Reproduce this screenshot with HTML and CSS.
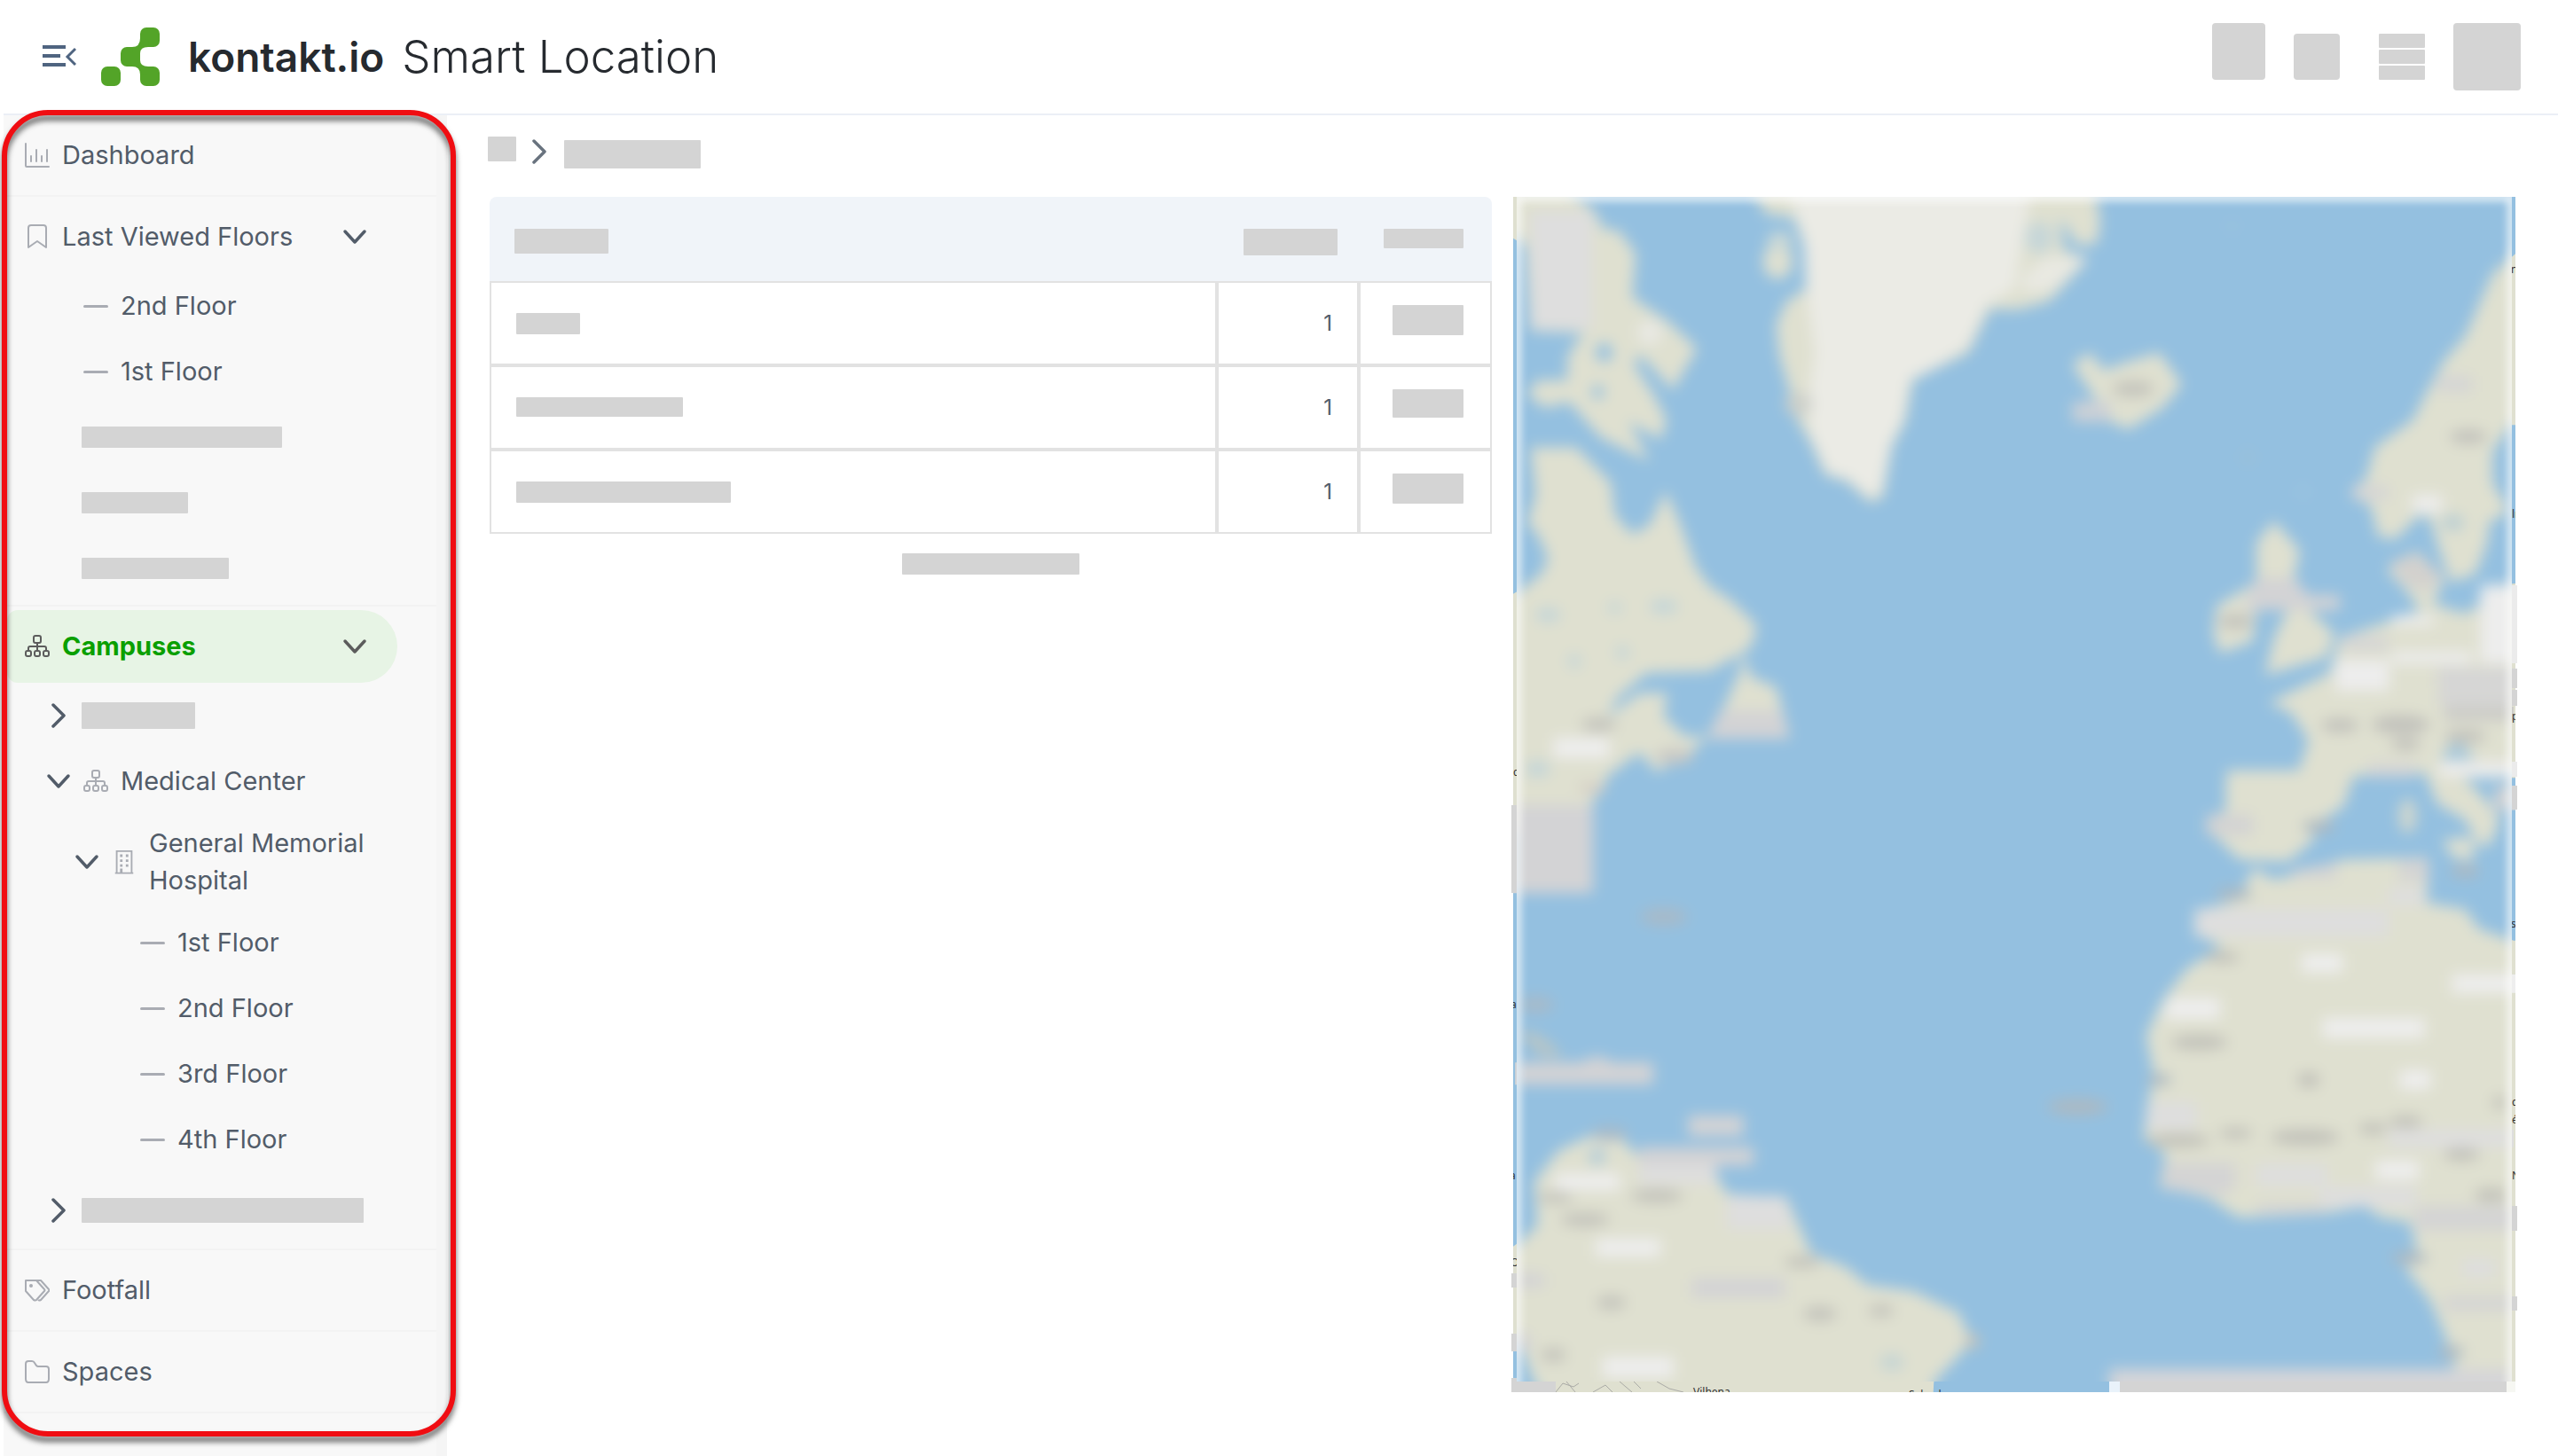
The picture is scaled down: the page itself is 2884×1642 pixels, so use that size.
FILE: index.html
```html
<!DOCTYPE html>
<html lang="en">
<head>
<meta charset="utf-8">
<title>Smart Location</title>
<link rel="stylesheet" href="styles.css">
</head>
<body>
<svg class="defs" aria-hidden="true">
  <symbol id="i-down" viewBox="0 0 28 28"><path d="M3 8l11 12L25 8" fill="none" stroke="currentColor" stroke-width="3.500" stroke-linecap="round" stroke-linejoin="round"/></symbol>
  <symbol id="i-right" viewBox="0 0 28 28"><path d="M8 2l12 12L8 26" fill="none" stroke="currentColor" stroke-width="3.500" stroke-linecap="round" stroke-linejoin="round"/></symbol>
  <symbol id="i-dash" viewBox="0 0 28 28"><path d="M1.500 14.500h25" stroke="currentColor" stroke-width="3" stroke-linecap="round"/></symbol>
  <symbol id="i-sitemap" viewBox="0 0 28 28"><g fill="none" stroke="currentColor" stroke-width="2"><rect x="10" y="2" width="8" height="8" rx="2"/><rect x="1" y="19" width="6" height="6" rx="2"/><rect x="11" y="19" width="6" height="6" rx="2"/><rect x="21" y="19" width="6" height="6" rx="2"/><path d="M14 10v9M4 19v-3q0-2 2-2h16q2 0 2 2v3"/></g></symbol>
  <symbol id="i-chart" viewBox="0 0 28 28"><g fill="none" stroke="currentColor" stroke-width="2" stroke-linecap="round"><path d="M1 1v25q0 1 1 1h25"/><path d="M7 15v6M13 8v13M19 15v6M25 8v13"/></g></symbol>
  <symbol id="i-bookmark" viewBox="0 0 28 28"><path d="M4 26V4q0-3 3-3h14q3 0 3 3v22l-10-7z" fill="none" stroke="currentColor" stroke-width="2" stroke-linejoin="round"/></symbol>
  <symbol id="i-building" viewBox="0 0 28 30"><path d="M5 28V2h18v26M3 28.500h22" fill="none" stroke="currentColor" stroke-width="2"/><path d="M9 6h3v3H9zM16 6h3v3h-3zM9 12h3v3H9zM16 12h3v3h-3zM9 18h3v3H9zM16 18h3v3h-3zM9 23h3v5H9z" fill="currentColor"/></symbol>
  <symbol id="i-tags" viewBox="0 0 28 28"><g fill="none" stroke="currentColor" stroke-width="2" stroke-linejoin="round"><path d="M1 3h12l9 10q1 1 0 2l-9 10q-1 1-3 0L1 15z"/><path d="M13 3h5l9 10q1 1 0 2l-9 10q-2 1-3 0"/></g><circle cx="7" cy="9" r="2" fill="currentColor"/></symbol>
  <symbol id="i-folder" viewBox="0 0 28 28"><path d="M1 22V5q0-3 3-3h4q2 0 3 2l2 3q1 1 2 1h9q3 0 3 3v11q0 4-3 4H4q-3 0-3-4z" fill="none" stroke="currentColor" stroke-width="2"/></symbol>
</svg>

<header class="topbar">
  <button class="menu-toggle" type="button" aria-label="Collapse menu">
    <svg width="38" height="28" viewBox="0 0 38 28"><g fill="none" stroke="#4f6480" stroke-width="4"><path d="M0 3h26M0 13h20M0 23h26"/><path d="M37 5l-9 9 9 9" stroke-width="3"/></g></svg>
  </button>
  <a class="brand" href="#">
    <svg width="66" height="66" viewBox="0 0 66 66" aria-hidden="true"><g fill="#53a428"><rect x="44" width="22" height="22" rx="7"/><rect x="22" y="22" width="22" height="22" rx="7"/><rect y="44" width="22" height="22" rx="7"/><rect x="44" y="44" width="22" height="22" rx="7"/><path d="M44 12q0 10-9 10l1 7h8q0-7 9-7l1-8zM33 37l2 7q9 0 9 9l9-1v-8q-9 0-9-7z"/></g></svg>
    <span class="brand-name">kontakt.io</span>
  </a>
  <h1 class="product">Smart Location</h1>
  <div class="tools">
    <div class="tool-group">
      <span class="ph ph-round" style="width:60px;height:64px"></span>
      <span class="ph ph-round" style="width:52px;height:52px"></span>
      <span class="tool-lines"><span class="ph"></span><span class="ph"></span><span class="ph"></span></span>
    </div>
    <span class="ph ph-round" style="width:76px;height:76px"></span>
  </div>
</header>

<div class="layout">
  <nav class="sidebar" aria-label="Locations">
    <section class="group">
      <a class="item" href="#"><svg class="icon"><use href="#i-chart"/></svg>Dashboard</a>
    </section>
    <section class="group">
      <button class="item" type="button"><svg class="icon"><use href="#i-bookmark"/></svg>Last Viewed Floors<svg class="caret end"><use href="#i-down"/></svg></button>
      <ul class="tree">
        <li><a class="node leaf" href="#"><svg class="icon"><use href="#i-dash"/></svg>2nd Floor</a></li>
        <li><a class="node leaf" href="#"><svg class="icon"><use href="#i-dash"/></svg>1st Floor</a></li>
        <li class="node masked"><span class="ph" style="width:226px;height:24px"></span></li>
        <li class="node masked"><span class="ph" style="width:120px;height:24px"></span></li>
        <li class="node masked"><span class="ph" style="width:166px;height:24px"></span></li>
      </ul>
    </section>
    <section class="group group-campuses">
      <button class="item active" type="button"><svg class="icon"><use href="#i-sitemap"/></svg>Campuses<svg class="caret end"><use href="#i-down"/></svg></button>
      <ul class="tree">
        <li><button class="node" type="button" aria-label="Expand campus"><svg class="caret"><use href="#i-right"/></svg><span class="ph" style="width:128px;height:30px"></span></button></li>
        <li>
          <button class="node" type="button"><svg class="caret"><use href="#i-down"/></svg><svg class="icon"><use href="#i-sitemap"/></svg>Medical Center</button>
          <ul class="tree">
            <li>
              <button class="node building" type="button"><svg class="caret"><use href="#i-down"/></svg><svg class="icon"><use href="#i-building"/></svg><span>General Memorial<br>Hospital</span></button>
              <ul class="tree">
                <li><a class="node floor" href="#"><svg class="icon"><use href="#i-dash"/></svg>1st Floor</a></li>
                <li><a class="node floor" href="#"><svg class="icon"><use href="#i-dash"/></svg>2nd Floor</a></li>
                <li><a class="node floor" href="#"><svg class="icon"><use href="#i-dash"/></svg>3rd Floor</a></li>
                <li><a class="node floor" href="#"><svg class="icon"><use href="#i-dash"/></svg>4th Floor</a></li>
              </ul>
            </li>
          </ul>
        </li>
        <li><button class="node last" type="button" aria-label="Expand campus"><svg class="caret"><use href="#i-right"/></svg><span class="ph" style="width:318px;height:28px"></span></button></li>
      </ul>
    </section>
    <section class="group">
      <a class="item" href="#"><svg class="icon"><use href="#i-tags"/></svg>Footfall</a>
    </section>
    <section class="group">
      <a class="item" href="#"><svg class="icon"><use href="#i-folder"/></svg>Spaces</a>
    </section>
    <div class="callout" aria-hidden="true"></div>
  </nav>

  <main class="content">
    <div class="crumbs">
      <span class="ph" style="width:32px;height:28px"></span>
      <svg class="caret"><use href="#i-right"/></svg>
      <span class="ph crumb-current" style="width:154px;height:32px"></span>
    </div>
    <div class="panels">
      <section class="list">
        <table class="sites">
          <colgroup><col><col class="col-count"><col class="col-action"></colgroup>
          <thead>
            <tr>
              <th><span class="ph" style="width:106px;height:28px"></span></th>
              <th class="head-count"><span class="ph" style="width:106px;height:30px"></span></th>
              <th class="action"><span class="ph" style="width:90px;height:22px"></span></th>
            </tr>
          </thead>
          <tbody>
            <tr><td><span class="ph" style="width:72px;height:24px"></span></td><td class="count">1</td><td class="action"><span class="ph" style="width:80px;height:34px"></span></td></tr>
            <tr><td><span class="ph" style="width:188px;height:22px"></span></td><td class="count">1</td><td class="action"><span class="ph" style="width:80px;height:32px"></span></td></tr>
            <tr><td><span class="ph" style="width:242px;height:24px"></span></td><td class="count">1</td><td class="action"><span class="ph" style="width:80px;height:34px"></span></td></tr>
          </tbody>
        </table>
        <span class="ph list-foot" style="width:200px;height:24px"></span>
      </section>

      <svg class="map" viewBox="0 0 1130 1348" role="img" aria-label="Map of the North Atlantic">
        <defs>
          <filter id="soft" color-interpolation-filters="sRGB" filterUnits="userSpaceOnUse" x="-40" y="-40" width="1210" height="1430"><feGaussianBlur stdDeviation="8"/></filter>
          <filter id="edge" color-interpolation-filters="sRGB" filterUnits="userSpaceOnUse" x="-40" y="-40" width="1210" height="1430"><feGaussianBlur stdDeviation="5"/></filter>
          <clipPath id="frame"><rect width="1130" height="1348"/></clipPath>
          <clipPath id="haze"><rect x="4" width="1122" height="1336"/></clipPath>
          <g id="terrain">
            <rect x="-40" y="-40" width="1210" height="1430" fill="#94c0e0"/>
            <!-- Baffin, Labrador, Greenland -->
            <g transform="translate(-16 -12) scale(.3954 .4464)" fill="#dfe0d0">
              <path d="M0 0H190L270 60 300 110 340 110 390 170 380 280 480 340 565 410 495 515 450 470 400 425 385 450 440 525 478 590 462 640 370 595 430 695 290 635 200 545 130 560 80 525 110 490 195 490 195 430 240 370 90 365 75 150 0 110Z"/>
              <path d="M90 65H265V360H95Z" fill="#dedede"/>
              <path d="M0 1050L60 1020 120 980 140 940 110 880 80 850 105 780 90 660 220 660 320 750 330 830 380 880 430 855 475 770 520 860 560 960 600 1010 660 1045 735 1110 722 1160 690 1180 600 1225 420 1230 340 1290 310 1340 400 1280 480 1280 470 1340 530 1390 590 1390 560 1420 450 1480 400 1430 310 1490 260 1568 0 1640Z"/>
              <path d="M690 1170L720 1240 790 1265 830 1395H590L645 1310 690 1220Z"/>
              <path d="M630 1325H805L828 1395H595Z" fill="#d3d3d5"/>
              <path d="M720 0L760 70 840 80 870 150 875 260 820 290 790 350 800 430 830 520 850 590 890 650 930 730 990 745 1060 800 1095 785 1120 660 1160 590 1180 490 1340 420 1400 310 1480 312 1570 290 1680 185 1610 160 1600 80 1650 150 1705 145 1715 90 1700 0Z"/>
              <path d="M820 0L870 130 880 290 900 420 880 540 890 630 940 725 990 735 1060 785 1090 770 1115 655 1150 590 1170 490 1260 450 1340 400 1390 300 1470 260 1520 0Z" fill="#ebebe5"/>
              <path d="M1490 230L1560 180 1680 180 1580 260 1500 270Z" fill="#e9e9e2"/>
              <ellipse cx="795" cy="190" rx="42" ry="44"/><ellipse cx="800" cy="140" rx="35" ry="25" fill="#ccd9d6"/>
              <ellipse cx="1540" cy="130" rx="40" ry="40" fill="#c6d6d8"/>
              <ellipse cx="855" cy="550" rx="38" ry="30" fill="#cdd0ca"/>
              <ellipse cx="430" cy="370" rx="35" ry="30" fill="#e9e9e4"/>
              <g fill="#94c0e0"><circle cx="300" cy="420" r="24"/><circle cx="282" cy="520" r="17"/></g>
              <g fill="#c3d5d8"><ellipse cx="140" cy="1083" rx="35" ry="18"/><ellipse cx="470" cy="1062" rx="40" ry="18"/><circle cx="215" cy="1200" r="18"/><circle cx="352" cy="1178" r="18"/><ellipse cx="110" cy="1472" rx="36" ry="20"/><ellipse cx="330" cy="1065" rx="20" ry="14"/></g>
              <rect x="155" y="1394" width="160" height="50" fill="#eeeeee"/>
              <ellipse cx="285" cy="1360" rx="50" ry="18" fill="#c4c4bd"/><ellipse cx="500" cy="1440" rx="55" ry="20" fill="#c9c9c5"/><ellipse cx="265" cy="1520" rx="40" ry="16" fill="#d6d0c6"/>
            </g>
            <!-- Caribbean and South America -->
            <g transform="translate(-16 678) scale(.3954 .4464)" fill="#dfe0d0">
              <path d="M0 1160L60 1120 110 1080 100 970 170 890 270 850 340 850 390 900 600 920 650 1000 820 1010 890 1150 990 1185 1050 1230 1180 1245 1310 1300 1345 1370 1310 1410 1240 1475 1235 1560H160L100 1475 60 1380 0 1330Z"/>
              <path d="M60 585L120 600 185 650 130 655 60 605Z" fill="#b9c6c6"/>
              <g fill="#d3d3d5"><path d="M35 18H268V240H35Z"/><path d="M46 668H230L280 650 330 668H440V724H46Z"/><path d="M540 802H697V854H540ZM400 882H727V928H400Z"/><path d="M550 1213H815V1262H550Z"/><path d="M35 1201H130V1236H35ZM35 1353H90V1398H35Z"/></g>
              <path d="M400 928H620V975H400ZM650 1005H815L835 1090H650Z" fill="#dedede"/>
              <path d="M160 948H345V990H160ZM275 1114H460V1158H275ZM295 1412H498V1464H295Z" fill="#eeeeee"/>
              <g fill="#c4c4bc"><ellipse cx="450" cy="1005" rx="75" ry="18"/><ellipse cx="245" cy="1065" rx="70" ry="18"/><ellipse cx="320" cy="1275" rx="42" ry="18"/><ellipse cx="915" cy="1303" rx="48" ry="19"/><ellipse cx="1090" cy="1295" rx="36" ry="16"/><ellipse cx="155" cy="1407" rx="36" ry="18"/><ellipse cx="865" cy="1172" rx="52" ry="16"/><ellipse cx="160" cy="1010" rx="52" ry="14"/><ellipse cx="1350" cy="1372" rx="22" ry="20"/></g>
              <g fill="#a8bac8"><ellipse cx="470" cy="300" rx="68" ry="22"/><ellipse cx="105" cy="522" rx="52" ry="20"/><ellipse cx="315" cy="848" rx="52" ry="18"/></g>
              <ellipse cx="280" cy="905" rx="24" ry="22" fill="#b4cdd9"/><ellipse cx="1120" cy="1425" rx="34" ry="20" fill="#c4d4d4"/>
            </g>
            <!-- Iceland, British Isles, Scandinavia, Europe -->
            <g transform="translate(564 -12) scale(.3916 .4464)" fill="#dfe0d0">
              <path d="M170 450L220 420 260 465 340 440 420 420 485 500 430 560 330 615 270 590 230 530Z"/>
              <path d="M170 545H280V595H170Z" fill="#cdd1d6"/>
              <ellipse cx="345" cy="512" rx="60" ry="20" fill="#c4c4bc"/>
              <path d="M1500 130L1380 220 1300 380 1240 440 1190 520 1150 590 1040 660 1015 740 970 775 1030 810 1050 885 1100 892 1170 830 1200 840 1230 930 1260 1000 1330 980 1365 900 1370 850 1430 820 1380 750 1380 670 1435 603 1500 603Z"/>
              <path d="M750 845L825 920 808 990 860 1080 925 1130 900 1190 725 1235 750 1140 790 1070 700 1060 690 1150 595 1180 575 1130 585 1060 700 1000 700 900Z"/>
              <path d="M700 990H810L850 1033H940V1070H660Z" fill="#d3d3d5"/>
              <path d="M1170 1070L1130 1020 1075 970 1160 920 1240 990 1210 1055 1300 1080 1340 1060 1350 1010 1500 1000V1495H1230L1170 1480 980 1490 950 1568 890 1600H610L620 1480 820 1480 850 1400 800 1330 735 1305 840 1260 910 1230 940 1140 1080 1100Z"/>
              <path d="M1085 950L1160 925 1235 985 1190 1025 1120 1000Z" fill="#d3d1ce"/>
              <path d="M1180 1470L1280 1480 1350 1540 1400 1600 1375 1660 1345 1670 1300 1600 1220 1560Z"/>
              <path d="M1235 1435L1280 1395 1330 1450H1235Z" fill="#a6c7da"/>
              <path d="M1345 1008H1451V1205H1345ZM1225 1454H1451V1491H1225ZM928 1197H1082V1275H928ZM1090 1085H1210V1110H1090ZM1090 1176H1320V1206H1090ZM1148 780H1234V824H1148Z" fill="#ededed"/>
              <path d="M1220 1218H1451V1268H1220ZM1225 1272H1451V1312H1225ZM1390 1515H1451V1575H1390ZM950 1138H1080V1172H950ZM1020 1458H1160V1492H1020ZM978 756H1080V792H978ZM1220 480H1320V520H1220Z" fill="#d5d5d5"/>
              <g fill="#c2c2bc"><ellipse cx="1115" cy="1360" rx="84" ry="24"/><ellipse cx="940" cy="1362" rx="54" ry="18"/><ellipse cx="1310" cy="633" rx="54" ry="18"/><ellipse cx="640" cy="1100" rx="50" ry="18"/><ellipse cx="1300" cy="1390" rx="62" ry="17"/><ellipse cx="910" cy="1515" rx="52" ry="17"/><ellipse cx="1130" cy="1410" rx="42" ry="16"/></g>
              <path d="M1240 1315H1440V1350H1240Z" fill="#cbcbc7"/>
              <ellipse cx="1265" cy="850" rx="32" ry="20" fill="#b9ced4"/><circle cx="675" cy="685" r="18" fill="#9bbfd8"/><circle cx="833" cy="772" r="18" fill="#9bc3df"/><circle cx="630" cy="100" r="16" fill="#9ac2de"/>
            </g>
            <!-- Iberia and Africa -->
            <g transform="translate(564 678) scale(.3916 .4464)" fill="#dfe0d0">
              <path d="M610 0L615 -70H950L960 0 890 50 860 110 790 160 650 155 555 75 620 20Z"/>
              <path d="M556 42H690V94H556Z" fill="#d3d3d3"/>
              <ellipse cx="1135" cy="45" rx="26" ry="44" fill="#ced6cf"/><path d="M1235 106L1324 98 1324 158 1265 150Z"/>
              <path d="M695 175L740 205 790 200 950 155 1195 150 1190 265 1300 280 1340 330 1440 360 1500 360V1560H1300L1270 1440 1240 1350 1200 1270 1130 1190 1160 1130 1140 1070 1060 1060 1010 1030 890 1050 650 1060 560 1010 420 980 440 900 375 860 385 780 405 700 382 600 430 510 500 430 600 375 520 340 530 285 640 260Z"/>
              <path d="M522 280H1080V350H522ZM1080 228H1182V270H1080ZM385 768H528V837H385ZM698 926H902V980H698ZM880 983H1160V1032H880ZM1080 838H1440V882H1080ZM1292 1166H1388V1210H1292Z" fill="#dedede"/>
              <path d="M430 922H640V985L600 1005 430 988ZM1155 1031H1451V1092H1155ZM1240 1259H1451V1295H1240ZM1380 0H1451V30H1380ZM700 1025H895V1050H700ZM800 183L930 163V205H800ZM1110 153H1195V210H1110Z" fill="#d4d4d4"/>
              <path d="M830 393H948V441H830ZM1262 446H1500V492H1262ZM448 505H594V558H430ZM890 556H1184V606H890ZM1112 688H1202V736H1112ZM1042 916H1168V964H1042Z" fill="#eeeeee"/>
              <g fill="#c2c2ba"><ellipse cx="535" cy="617" rx="82" ry="19"/><ellipse cx="850" cy="712" rx="32" ry="20"/><ellipse cx="840" cy="857" rx="100" ry="20"/><ellipse cx="475" cy="865" rx="92" ry="17"/><ellipse cx="1290" cy="900" rx="52" ry="17"/><ellipse cx="1375" cy="1003" rx="48" ry="18"/><ellipse cx="1130" cy="818" rx="48" ry="16"/><ellipse cx="1035" cy="835" rx="42" ry="15"/><ellipse cx="640" cy="847" rx="48" ry="14"/><ellipse cx="600" cy="402" rx="52" ry="15"/><ellipse cx="1400" cy="770" rx="22" ry="16"/></g>
              <g fill="#adb9c1"><ellipse cx="185" cy="780" rx="88" ry="20"/><ellipse cx="635" cy="242" rx="52" ry="15"/><ellipse cx="1300" cy="185" rx="42" ry="16"/><ellipse cx="880" cy="72" rx="47" ry="16"/><ellipse cx="420" cy="712" rx="34" ry="15"/><ellipse cx="1140" cy="1162" rx="52" ry="16"/><ellipse cx="1260" cy="1400" rx="37" ry="16"/></g>
            </g>
          </g>
        </defs>
        <g clip-path="url(#frame)">
          <use href="#terrain"/>
          <path d="M48 1348l8-10 12 4 6-4M60 1336l10 12M90 1348l14-8 8 8M120 1336l14 12M136 1336l8 8M162 1336l14 8 16 4" fill="none" stroke="#aaaaa6" stroke-width="1"/>
          <g class="map-text">
            <text x="203" y="1352">Vilhena</text>
            <text x="446" y="1355">Salvador</text>
            <text x="0" y="653">c</text><text x="-3" y="915">a</text><text x="-4" y="1108">a</text><text x="-3" y="1206">O</text>
            <text x="1125" y="86">n</text><text x="1126" y="362">lr</text><text x="1126" y="590">p</text><text x="1125" y="824">s</text><text x="1126" y="1025">d</text><text x="1126" y="1045">é</text><text x="1126" y="1108">N</text>
          </g>
        </g>
        <g clip-path="url(#haze)">
          <g filter="url(#soft)">
            <use href="#terrain"/>
            <path d="M672 1322H1126V1360H672Z" fill="#d5d5d8"/>
          </g>
          <path d="M4 1400V0H1126V1400" fill="none" stroke="#fff" stroke-width="9" opacity=".8" filter="url(#edge)"/>
        </g>
        <path d="M672 1336H684V1348H672Z" fill="#e9f2fa"/>
        <path d="M684 1336H1120V1348H684ZM-2 1332H4V1336H48V1348H-2ZM-2 686H4V785H-2ZM-2 1214H4V1230H-2ZM-2 1282H4V1302H-2ZM1126 532H1132V554H1126ZM1126 556H1132V574H1126ZM1126 664H1132V691H1126ZM1126 1138H1132V1166H1126ZM1126 1240H1132V1256H1126Z" fill="#d4d4d4"/>
        <path d="M1126 438H1132V526H1126ZM1126 637H1132V654H1126Z" fill="#ebebeb"/>
        <path d="M1120 1336H1130V1348H1120Z" fill="#f6f7f2"/>
      </svg>
    </div>
  </main>
</div>
</body>
</html>
```
FILE: styles.css
```css
* { box-sizing: border-box; }

body {
  margin: 0;
  min-height: 100vh;
  display: flex;
  flex-direction: column;
  background: #fff;
  color: #525c69;
  font-family: Inter, "Open Sans", sans-serif;
  font-size: 29px;
  line-height: 42px;
}

a { color: inherit; text-decoration: none; }
button { border: 0; background: none; padding: 0; font: inherit; color: inherit; text-align: left; cursor: pointer; }
ul { list-style: none; margin: 0; padding: 0; }
svg { flex: none; }

.defs { position: absolute; width: 0; height: 0; }

.ph { display: block; flex: none; background: #d4d4d4; border-radius: 1px; }
.ph-round { border-radius: 4px; }

/* Top bar */
.topbar {
  display: flex;
  align-items: center;
  height: 130px;
  margin-left: 4px;
  padding: 0 42px 0 44px;
  border-bottom: 2px solid #ebeff6;
}
.menu-toggle { display: flex; margin-right: 28px; }
.brand { display: flex; align-items: center; gap: 32px; }
.brand-name { color: #262a2f; font-size: 46px; font-weight: 600; line-height: 66px; }
.product { margin: 0 0 0 20px; color: #262a2f; font-size: 51px; font-weight: 300; line-height: 66px; }
.tools { display: flex; align-items: flex-start; gap: 32px; margin-left: auto; }
.tool-group { display: flex; align-items: flex-end; gap: 32px; }
.tool-lines { display: grid; gap: 2px; margin-left: 12px; }
.tool-lines .ph { width: 52px; height: 16px; }

/* Sidebar */
.layout { display: flex; flex: 1; }
.sidebar {
  position: relative;
  flex: none;
  width: 500px;
  margin-left: 4px;
  border-right: 12px solid #f5f5f5;
  background: #f8f8f8;
}
.group { padding: 4px 0; border-bottom: 2px solid #f3f3f3; }
.group-campuses { padding-bottom: 0; }
.icon { width: 28px; height: 28px; color: #a9acb3; }
.caret { width: 28px; height: 28px; }
.item {
  display: flex;
  align-items: center;
  gap: 14px;
  width: 440px;
  height: 82px;
  margin-left: 4px;
  padding: 0 34px 0 20px;
}
.end { margin-left: auto; }
.active {
  border-radius: 12px 41px 41px 12px;
  background: #e7f4e5;
  color: #0a9f00;
  font-weight: 700;
}
.active .icon, .active .caret { color: #5c5c5c; }
.node { display: flex; align-items: center; gap: 14px; height: 74px; padding-left: 48px; }
.node .caret + .ph { margin-left: -2px; }
.leaf { padding-left: 90px; }
.masked { padding-left: 88px; }
.building { height: 108px; padding-left: 80px; }
.floor { padding-left: 154px; }
.last { height: 86px; }

.callout {
  position: absolute;
  inset: -6px -22px 22px -2px;
  border: 6px solid #f00d12;
  border-radius: 52px;
  filter: drop-shadow(0 6px 3px rgba(0, 0, 0, .6));
  pointer-events: none;
}

/* Content */
.content { flex: 1; min-width: 0; padding: 24px 48px 0 46px; }
.crumbs { display: flex; align-items: flex-start; height: 68px; gap: 12px; }
.crumbs .caret { margin-top: 3px; color: #69737f; }
.crumb-current { margin: 4px 0 0 2px; }
.panels { display: grid; grid-template-columns: 1fr 1fr; gap: 24px; padding-left: 2px; align-items: start; }

.sites { width: 100%; table-layout: fixed; border-collapse: separate; border-spacing: 0; }
.col-count { width: 160px; }
.col-action { width: 150px; }
.sites th, .sites td { height: 95px; padding: 34px 28px 0; vertical-align: top; text-align: left; }
.sites th { padding-top: 36px; background: #f0f4f9; }
.sites th:first-child { border-top-left-radius: 8px; }
.sites th:last-child { border-top-right-radius: 8px; }
.sites td { border: 2px solid #e2e2e2; }
.sites .head-count { padding: 36px 24px 0; }
.sites .count { padding-top: 25px; text-align: right; font-size: 24px; }
.sites .action .ph { margin-left: auto; }
.sites td.action { padding: 25px 30px 0 0; }
.sites th.action { padding-right: 32px; padding-left: 0; }
.head-count .ph { margin-left: auto; }
.list-foot { margin: 22px auto 0; }

.map { display: block; width: 100%; height: auto; overflow: visible; }
.map-text { font-family: "Noto Sans", sans-serif; font-size: 12px; fill: #333; }
```
